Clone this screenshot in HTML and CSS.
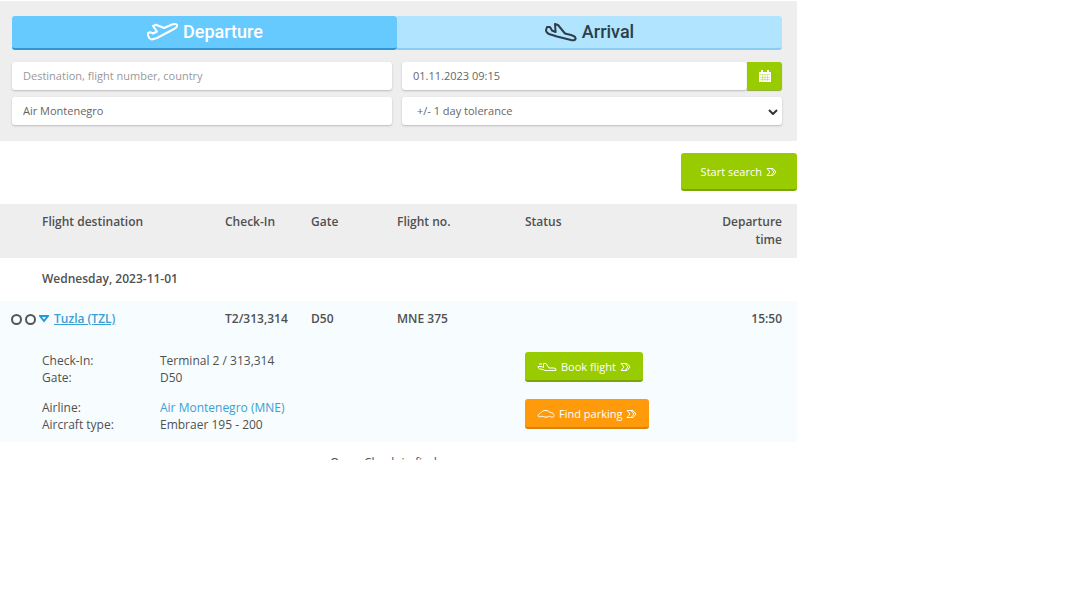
FILE: index.html
```html
<!DOCTYPE html>
<html lang="en">
<head>
    <meta charset="UTF-8">
    <meta name="viewport" content="width=device-width, initial-scale=1.0">
    <title>Flight search</title>
    <link rel="stylesheet" href="styles.css">
</head>
<body>
<svg class="sprite" aria-hidden="true">
    <symbol id="arrow" viewBox="0 0 11 10">
        <path d="M1 1.500h6L10 5 7 8.500H1L4 5zM5.500 2 8 5 5.500 8"/>
    </symbol>
</svg>
<main>
    <form class="search">
        <div class="tabs">
            <button type="button" class="tab active">
                <svg class="plane" viewBox="0 0 32 19"><path d="m2 10 2-.8 3 1.300L11 8.500 7 3l3-1.200L18 5l8-3.500c2-.8 4.500-.6 5 .7.5 1.500-1 2.800-3 3.800L11 15l-5 1.500c-2 .3-3-1.500-4-4z"/></svg>
                Departure
            </button>
            <button type="button" class="tab">
                <svg class="plane" viewBox="0 0 32 19"><path d="M2 4 1 7c0 2 1 3 3 4l8 2.500 14 3.500c3 .6 5 0 4.500-2S28 12.500 26 12l-6-1.500L13 2l-3-1 .6 8L7 7.500 5 4z"/></svg>
                Arrival
            </button>
        </div>
        <div class="fields">
            <input type="text" aria-label="Destination" placeholder="Destination, flight number, country">
            <div class="date">
                <input type="text" aria-label="Date" value="01.11.2023 09:15">
                <button type="button" aria-label="Open calendar">
                    <svg viewBox="0 0 12 12"><path fill="#fff" d="M0 2h2V0h2v2h4V0h2v2h2v10H0z"/><path stroke="#9c0" d="M1 4.500h10M1 7.500h10M1 9.500h10M3.500 5v6M6 5v6M8.500 5v6" stroke-width=".4"/></svg>
                </button>
            </div>
            <input type="text" aria-label="Airline" value="Air Montenegro">
            <div class="select">
                <select aria-label="Tolerance">
                    <option>+/- 1 day tolerance</option>
                </select>
                <svg viewBox="0 0 10 6"><path d="m1 1 4 4 4-4"/></svg>
            </div>
        </div>
        <div class="submit">
            <button type="submit" class="btn big">Start search <svg class="arrow"><use href="#arrow"/></svg></button>
        </div>
    </form>

    <table class="flights">
        <colgroup>
            <col class="c-dest"><col class="c-gate"><col class="c-gate"><col class="c-flight"><col><col class="c-time">
        </colgroup>
        <thead>
            <tr>
                <th>Flight destination</th>
                <th>Check-In</th>
                <th>Gate</th>
                <th>Flight no.</th>
                <th>Status</th>
                <th>Departure time</th>
            </tr>
        </thead>
        <tbody>
            <tr class="day">
                <th colspan="6">Wednesday, 2023-11-01</th>
            </tr>
            <tr class="flight">
                <td>
                    <div class="dest">
                        <span class="dot"></span><span class="dot"></span>
                        <svg class="toggle" viewBox="0 0 10 8"><path d="M1 1h8L5 6z"/></svg>
                        <a href="#">Tuzla (TZL)</a>
                    </div>
                </td>
                <td>T2/313,314</td>
                <td>D50</td>
                <td>MNE 375</td>
                <td></td>
                <td>15:50</td>
            </tr>
            <tr class="details">
                <td colspan="4">
                    <dl>
                        <dt>Check-In:</dt><dd>Terminal 2 / 313,314</dd>
                        <dt>Gate:</dt><dd>D50</dd>
                    </dl>
                    <dl>
                        <dt>Airline:</dt><dd><a href="#">Air Montenegro (MNE)</a></dd>
                        <dt>Aircraft type:</dt><dd>Embraer 195 - 200</dd>
                    </dl>
                </td>
                <td colspan="2">
                    <div class="actions">
                        <button type="button" class="btn"><svg class="small-icon" viewBox="0 0 20 10"><path d="M1 4.500C1 7 3 7 6 7.500L8 8.500h11V7l-2-1H12L9 1.500H6.500V5.500L4 4.500zM2 2h3"/></svg> Book flight <svg class="arrow"><use href="#arrow"/></svg></button>
                        <button type="button" class="btn orange"><svg class="small-icon car" viewBox="0 0 18 10"><path d="M3 8C0 8 1 5 3 4.500l2-2C7 1 11 1 13 3.500c3 .5 4 1 4 3S15 8 14 8c-1-1-2-1-3 0H7C6 7 4 7 3 8z"/></svg> Find parking <svg class="arrow"><use href="#arrow"/></svg></button>
                    </div>
                </td>
            </tr>
        </tbody>
    </table>
    <p class="more">Open Check-in find</p>
</main>
</body>
</html>
```

FILE: styles.css
```css
* {
    box-sizing: border-box;
}
body {
    margin: 0;
    background: #fff;
    color: #505050;
    font-family: "Open Sans", sans-serif;
    font-size: 12px;
    line-height: 18px;
}
main {
    width: 100%;
    max-width: 797px;
    padding-top: 1px;
}
button, input, select {
    font: inherit;
    border: 0;
    margin: 0;
}
button {
    cursor: pointer;
}
svg {
    fill: none;
    stroke: currentColor;
}
a {
    color: #3aa0d4;
}
.sprite {
    display: none;
}

/* search form */
.tabs, .fields {
    background: #eee;
    padding: 15px 15px 0 12px;
}
.tabs {
    display: flex;
}
.tab {
    flex: 1;
    display: flex;
    align-items: center;
    justify-content: center;
    gap: 5px;
    height: 34px;
    padding: 0;
    background: #b0e4ff;
    border-bottom: 2px solid #8accf2;
    border-radius: 0 3px 3px 0;
    color: #2d3e48;
    font-family: Roboto, sans-serif;
    font-size: 18px;
    font-weight: 500;
}
.tab.active {
    background: #66caff;
    border-color: #2e96d2;
    border-radius: 3px;
    color: #fff;
}
.plane {
    width: 32px;
    height: 19px;
    stroke-width: 2;
    stroke-linejoin: round;
}
.fields {
    display: grid;
    grid-template-columns: 1fr 1fr;
    gap: 7px 10px;
    padding-top: 12px;
    padding-bottom: 16px;
}
.fields input, .fields select {
    width: 100%;
    height: 28px;
    padding: 0 11px 1px;
    background: #fff;
    border-radius: 3px;
    box-shadow: 0 1px 2px #bbb;
    color: #666;
    font-size: 11px;
}
.fields input::placeholder {
    color: #999;
}
.date {
    display: flex;
}
.date button {
    flex: 0 0 35px;
    display: flex;
    align-items: center;
    justify-content: center;
    padding: 0;
    background: #9c0;
    border-radius: 0 3px 3px 0;
    box-shadow: 0 1px 1px #8aad28;
}
.date svg {
    width: 12px;
    height: 12px;
    stroke: none;
}
.select {
    position: relative;
}
.fields select {
    appearance: none;
    padding: 0 15px;
}
.select svg {
    position: absolute;
    right: 4px;
    top: 12px;
    width: 10px;
    height: 6px;
    stroke: #333;
    stroke-width: 2;
    pointer-events: none;
}
.submit {
    display: flex;
    justify-content: flex-end;
    padding: 12px 0 13px;
}

/* buttons */
.btn {
    display: flex;
    align-items: center;
    gap: 4px;
    height: 30px;
    padding: 1px 12px 0;
    background: #9c0;
    border-bottom: 2px solid #7ba50a;
    border-radius: 3px;
    color: #fff;
    font-size: 11px;
}
.btn.big {
    height: 38px;
    padding: 1px 20px 0;
}
.btn.orange {
    background: #ff9a0a;
    border-color: #d8820c;
}
.arrow {
    width: 11px;
    height: 10px;
}
.small-icon {
    width: 20px;
    height: 10px;
}
.car {
    width: 18px;
}

/* flight list */
.flights {
    width: 100%;
    table-layout: fixed;
    border-collapse: collapse;
}
.c-dest {
    width: 225px;
}
.c-gate {
    width: 86px;
}
.c-flight {
    width: 128px;
}
.c-time {
    width: 90px;
}
.flights th, .flights td {
    padding: 9px 0;
    text-align: left;
    vertical-align: top;
}
.flights th, .flight td {
    font-weight: 600;
}
.flights th:first-child {
    padding-left: 42px;
}
.flights th:last-child:not(:first-child), .flight td:last-child {
    padding-right: 15px;
    text-align: right;
}
thead {
    background: #eee;
}
.flights .day th {
    padding-top: 12px;
    padding-bottom: 13px;
}
.flight, .details {
    background: #f7fcff;
}
.dest {
    display: flex;
    align-items: center;
    gap: 3px;
    padding-left: 11px;
}
.dot {
    width: 11px;
    height: 11px;
    border: 2px solid #555;
    border-radius: 50%;
}
.toggle {
    width: 10px;
    height: 8px;
    margin-right: 2px;
    stroke: #2898d4;
    stroke-width: 2;
}
.flights .details td {
    padding: 15px 0 9px;
}
dl {
    display: grid;
    grid-template-columns: 118px 1fr;
    margin: 0 0 13px 42px;
    line-height: 17px;
}
dl:last-child {
    margin-bottom: 0;
}
dd {
    margin: 0;
}
dd a {
    text-decoration: none;
}
.actions {
    display: flex;
    flex-direction: column;
    align-items: flex-start;
    gap: 17px;
}
/* only the top edge of the next line shows */
.more {
    height: 18px;
    margin: 0;
    padding: 12px 0 0 330px;
    overflow: hidden;
}
```
